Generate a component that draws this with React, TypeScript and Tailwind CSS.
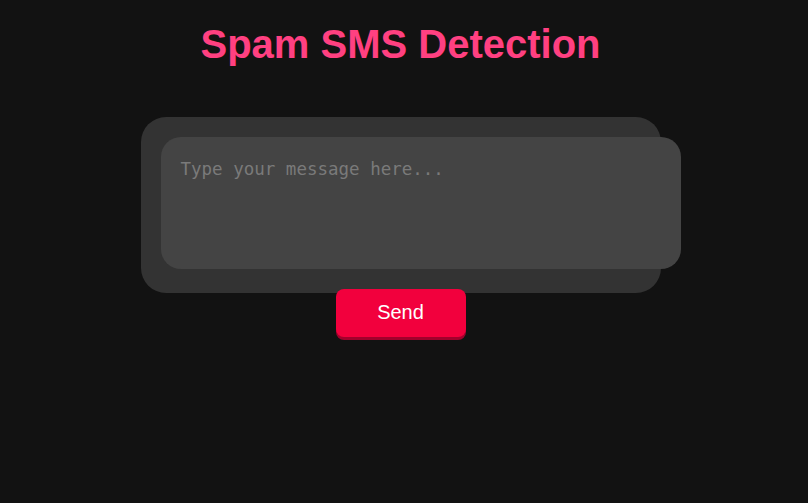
import React, { useState } from 'react';

export default function App() {
  const [message, setMessage] = useState('');

  return (
    <div className="min-h-[503px] w-full bg-[#121212] font-['Liberation_Sans',Arial,sans-serif]">
      <div className="flex flex-col items-center pr-[7px] pt-[20px]">
        {/* Title */}
        <h1 className="text-[40px] leading-[48px] font-bold text-[#ff4081]">Spam SMS Detection</h1>

        {/* Message box */}
        <div className="mt-[49px] w-[520px] rounded-[25px] bg-[#333333] p-5 pb-6">
          <textarea
            value={message}
            onChange={(e) => setMessage(e.target.value)}
            placeholder="Type your message here..."
            className="block h-[132px] w-[520px] resize-none rounded-[20px] bg-[#444444] p-5 font-['DejaVu_Sans_Mono',monospace] text-[17.5px] leading-[24px] text-[#dddddd] outline-none placeholder:text-[#7a7a7a]"
          />
        </div>

        {/* Action */}
        <button className="relative -mt-[4px] h-[48px] w-[130px] rounded-lg bg-[#f2003d] pb-[2px] text-[20px] text-white shadow-[0_3px_0_#a3002c]">
          Send
        </button>
      </div>
    </div>
  );
}
